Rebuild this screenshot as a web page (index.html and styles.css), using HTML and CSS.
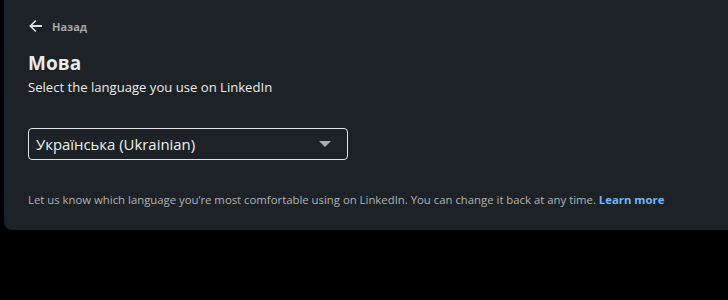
FILE: index.html
```html
<!DOCTYPE html>
<html lang="uk">
<head>
    <meta charset="UTF-8">
    <meta name="viewport" content="width=device-width, initial-scale=1.0">
    <title>Мова</title>
    <link rel="stylesheet" href="styles.css">
</head>
<body>
    <div class="card">
        <a class="back-link" href="#">
            <svg class="back-icon" width="16" height="16" viewBox="0 0 16 16">
                <path d="M14 7H4.4l4-4L7.3 1.9 1.2 8l6.1 6.1 1.1-1.1-4-4H14z" fill="currentColor"/>
            </svg>
            Назад
        </a>
        <h1 class="title">Мова</h1>
        <p class="subtitle">Select the language you use on LinkedIn</p>
        <div class="select-box">
            <span class="select-value">Українська (Ukrainian)</span>
            <span class="select-caret"></span>
        </div>
        <p class="note">
            Let us know which language you’re most comfortable using on LinkedIn. You can change it back at any time.
            <a class="note-link" href="#">Learn more</a>
        </p>
    </div>
</body>
</html>
```

FILE: styles.css
```css
body {
    margin: 0;
    padding: 0;
    background: #000;
    font-family: 'Open Sans', 'Noto Sans', sans-serif;
    overflow: hidden;
    height: 300px;
}
.card {
    background-color: #1d2226;
    margin-left: 4px;
    width: 734px;
    height: 230px;
    border-radius: 0 0 8px 8px;
    padding: 17px 24px 0 24px;
    box-sizing: border-box;
}
.back-link {
    display: flex;
    align-items: center;
    gap: 8px;
    color: #a3a5a7;
    font-size: 11px;
    font-weight: 700;
    text-decoration: none;
    height: 18px;
}
.back-icon {
    color: #dfe0e1;
}
.title {
    margin: 14px 0 0 0;
    font-size: 19px;
    font-weight: 700;
    line-height: 28px;
    color: #e9eaeb;
}
.subtitle {
    margin: 0;
    font-size: 13.1px;
    line-height: 20px;
    color: #e9eaeb;
}
.select-box {
    margin-top: 31px;
    width: 320px;
    height: 32px;
    border: 1px solid #e2e3e4;
    border-radius: 4px;
    box-sizing: border-box;
    display: flex;
    align-items: center;
    justify-content: space-between;
    padding: 0 16px 0 7px;
}
.select-value {
    color: #eeeff0;
    font-size: 14.9px;
}
.select-caret {
    width: 0;
    height: 0;
    border-left: 6px solid transparent;
    border-right: 6px solid transparent;
    border-top: 6px solid #a9abad;
}
.note {
    margin: 32px 0 0 0;
    font-size: 11.35px;
    line-height: 16px;
    color: #b0b2b4;
}
.note-link {
    color: #71b7fb;
    font-weight: 700;
    text-decoration: none;
}
```
